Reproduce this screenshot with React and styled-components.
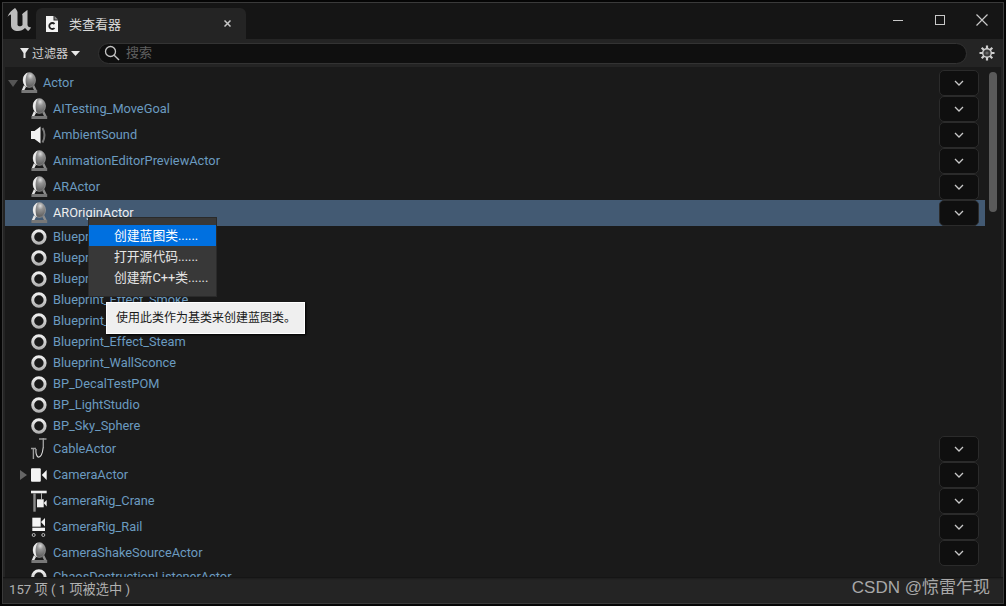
import React from 'react';
import styled, { createGlobalStyle } from 'styled-components';

const GlobalStyle = createGlobalStyle`
  html, body { margin: 0; padding: 0; background: #000; }
  body { font-family: Roboto, "Noto Sans CJK SC", sans-serif; }
`;

const Window = styled.div`
  box-sizing: border-box;
  width: 1006px;
  height: 606px;
  padding: 2px;
  background: #050505;
  display: flex;
  flex-direction: column;
  overflow: hidden;
`;

const Frame = styled.div`
  flex: 1;
  min-height: 0;
  border: 1px solid #3a3a3a;
  display: flex;
  flex-direction: column;
  background: #242424;
`;

const TitleBar = styled.div`
  height: 36px;
  flex-shrink: 0;
  display: flex;
  align-items: flex-end;
  padding-left: 4px;
  background: #151515;
`;

const Logo = styled.svg`
  width: 24px;
  height: 24px;
  margin-right: 5px;
  align-self: flex-start;
  margin-top: 5px;
`;

const Tab = styled.div`
  width: 210px;
  height: 31px;
  box-sizing: border-box;
  background: #242424;
  border-radius: 6px 6px 0 0;
  display: flex;
  align-items: center;
  padding: 0 15px 0 10px;
  color: #d8d8d8;
  font-size: 13px;
`;

const TabTitle = styled.span`
  flex: 1;
  margin-left: 11px;
  padding-bottom: 1px;
`;

const TabClose = styled.svg`
  width: 7px;
  height: 7px;
`;

const WindowControls = styled.div`
  margin-left: auto;
  align-self: flex-start;
  display: flex;
  align-items: center;
  height: 34px;
  padding-right: 11px;
  gap: 22px;
`;

const ControlIcon = styled.svg`
  width: 20px;
  height: 20px;
  display: block;
`;

const Toolbar = styled.div`
  height: 28px;
  flex-shrink: 0;
  display: flex;
  align-items: center;
  padding: 0 8px 0 17px;
`;

const FilterButton = styled.div`
  display: flex;
  align-items: center;
  color: #d0d0d0;
  font-size: 12px;
  width: 78px;
`;

const FilterLabel = styled.span`
  margin-left: 3px;
  padding-bottom: 1px;
`;

const FilterCaret = styled.svg`
  width: 9px;
  height: 5px;
  margin-left: 3px;
`;

const SearchBox = styled.div`
  flex: 1;
  height: 21px;
  box-sizing: border-box;
  background: #0f0f0f;
  border: 1px solid #333;
  border-radius: 11px;
  display: flex;
  align-items: center;
  padding-left: 5px;
  color: #5f5f5f;
  font-size: 13px;
  gap: 6px;
`;

const SearchLabel = styled.span`
  padding-bottom: 3px;
`;

const GearIcon = styled.svg`
  width: 16px;
  height: 16px;
  margin-left: 12px;
`;

const Body = styled.div`
  flex: 1;
  min-height: 0;
  position: relative;
  display: flex;
  margin: 0 2px;
  background: #1a1a1a;
`;

const Tree = styled.div`
  flex: 1;
  min-width: 0;
  overflow: hidden;
  padding-top: 3px;
`;

const Row = styled.div`
  height: ${(p) => (p.$tall ? 26 : 21)}px;
  width: 980px;
  display: flex;
  align-items: center;
  box-sizing: border-box;
  background: ${(p) => (p.$selected ? '#435a73' : 'transparent')};
  color: ${(p) => (p.$selected ? '#eeeeee' : '#6b9bc0')};
  font-size: 12.8px;
  padding-left: ${(p) => (p.$root ? 3 : 13)}px;
`;

const Expander = styled.div`
  width: 13px;
  display: flex;
  flex-shrink: 0;
`;

const ArrowDown = styled.div`
  width: 0;
  height: 0;
  border-left: 5.5px solid transparent;
  border-right: 5.5px solid transparent;
  border-top: 7px solid #555;
  margin-top: 1px;
`;

const ArrowRight = styled.div`
  width: 0;
  height: 0;
  margin-left: 2px;
  border-top: 5.5px solid transparent;
  border-bottom: 5.5px solid transparent;
  border-left: 7px solid #666;
`;

const IconSlot = styled.svg`
  width: 18px;
  height: 24px;
  flex-shrink: 0;
`;

const Name = styled.span`
  margin-left: 4px;
  flex: 1;
  white-space: nowrap;
  padding-bottom: ${(p) => (p.$tall ? 2 : 0)}px;
`;

const ChevronButton = styled.div`
  width: 40px;
  height: 26px;
  box-sizing: border-box;
  margin-right: 6px;
  background: #0f0f0f;
  border: 1px solid #2b2b2b;
  border-radius: 5px;
  display: flex;
  align-items: center;
  justify-content: center;
`;

const ScrollTrack = styled.div`
  width: 16px;
  flex-shrink: 0;
  padding: 5px 0 0 4px;
  box-sizing: border-box;
`;

const ScrollThumb = styled.div`
  width: 8px;
  height: 140px;
  border-radius: 4px;
  background: #5a5a5a;
`;

const Menu = styled.div`
  position: absolute;
  left: 83px;
  top: 150px;
  width: 129px;
  box-sizing: border-box;
  padding: 7px 0 8px;
  background: #383838;
  border: 1px solid #2a2a2a;
  font-size: 12.8px;
`;

const MenuItem = styled.div`
  height: 21px;
  line-height: 22px;
  padding-left: 25px;
  background: ${(p) => (p.$active ? '#0070e0' : 'transparent')};
  color: ${(p) => (p.$active ? '#fff' : '#e6e6e6')};
`;

const Tooltip = styled.div`
  position: absolute;
  left: 101px;
  top: 235px;
  width: 199px;
  height: 32px;
  box-sizing: border-box;
  padding-left: 9px;
  line-height: 30px;
  background: #efefef;
  border: 1px solid #fff;
  box-shadow: 1px 1px 2px #000;
  font-size: 12px;
  color: #1a1a1a;
`;

const StatusBar = styled.div`
  height: 26px;
  flex-shrink: 0;
  display: flex;
  align-items: center;
  justify-content: space-between;
  padding: 0 13px 0 6px;
  color: #b0b0b0;
  font-size: 13.2px;
  box-shadow: inset 0 2px 2px -1px #111;
`;

const StatusText = styled.span`
  padding-bottom: 3px;
`;

const Watermark = styled.span`
  color: #a8a8a8;
  font-family: "Liberation Sans", "Noto Sans CJK SC", sans-serif;
  font-size: 17px;
  line-height: 20px;
  padding-bottom: 5px;
`;

function ActorIcon() {
  return (
    <IconSlot viewBox="0 0 18 24">
      <defs>
        <radialGradient id="ball" cx="0.58" cy="0.22" r="0.85">
          <stop offset="0" stopColor="#dcdcdc" />
          <stop offset="0.3" stopColor="#949494" />
          <stop offset="1" stopColor="#505050" />
        </radialGradient>
      </defs>
      <path d="M3 14 L0.8 19 H3.4 L5 16 Z" fill="#e4e4e4" />
      <path d="M13.2 14 L15.6 19 H13 L11.4 16 Z" fill="#8c8c8c" />
      <ellipse cx="8.3" cy="9" rx="6.2" ry="7.4" fill="url(#ball)" stroke="#a8a8a8" strokeWidth="0.6" />
      <path d="M6.6 1.8 C3 3 1.6 7 2.1 10.8 C2.6 13.6 4.2 15.6 6 16.2 C4.2 12.5 4 6 6.6 1.8 Z" fill="#ececec" />
      <rect x="0.4" y="19" width="15.8" height="3" fill="#777" />
    </IconSlot>
  );
}

function SoundIcon() {
  return (
    <IconSlot viewBox="0 0 18 24">
      <path d="M0 8 H3.5 L9.5 3.5 V20.5 L3.5 16 H0 Z" fill="#f2f2f2" />
      <path d="M11.5 5 Q15.5 12 11.5 19.5" fill="none" stroke="#777" strokeWidth="2" />
    </IconSlot>
  );
}

function RingIcon() {
  return (
    <IconSlot viewBox="0 0 18 24">
      <defs>
        <linearGradient id="ring" x1="0" y1="0" x2="0" y2="1">
          <stop offset="0" stopColor="#ededed" />
          <stop offset="1" stopColor="#b4b4b4" />
        </linearGradient>
      </defs>
      <circle cx="7.9" cy="12" r="6.2" fill="none" stroke="url(#ring)" strokeWidth="3" />
    </IconSlot>
  );
}

function CableIcon() {
  return (
    <IconSlot viewBox="0 0 18 24">
      <path d="M12.3 10 Q11 21 7 20 Q4.5 18 5 12" fill="none" stroke="#d8d8d8" strokeWidth="1.1" />
      <path d="M12.3 1 V10 M8 2 H15.5 M0 11.5 H5 M2.4 11.5 V22" fill="none" stroke="#9a9a9a" strokeWidth="1.4" />
    </IconSlot>
  );
}

function CameraIcon() {
  return (
    <IconSlot viewBox="0 0 18 24">
      <rect x="0" y="5.3" width="9.8" height="13.4" rx="1" fill="#f4f4f4" />
      <path d="M10.8 12 L15.7 7 V17 Z" fill="#f4f4f4" />
    </IconSlot>
  );
}

function CraneIcon() {
  return (
    <IconSlot viewBox="0 0 18 24">
      <rect x="0" y="1.7" width="15.7" height="2.6" fill="#f0f0f0" />
      <rect x="2.3" y="4.3" width="2.4" height="18.4" fill="#8a8a8a" />
      <rect x="10" y="4.3" width="0.8" height="6" fill="#cfcfcf" />
      <rect x="6" y="10.3" width="6.7" height="8" fill="#f0f0f0" />
      <path d="M12.7 14 L15.7 11 V17.5 Z" fill="#f0f0f0" />
    </IconSlot>
  );
}

function RailIcon() {
  return (
    <IconSlot viewBox="0 0 18 24">
      <rect x="1.3" y="2.7" width="8.4" height="9" fill="#f4f4f4" />
      <path d="M10 7 L14 3 V11.5 Z" fill="#f4f4f4" />
      <rect x="1.3" y="12.7" width="12.7" height="3.3" fill="#f4f4f4" />
      <circle cx="2.7" cy="20" r="1.5" fill="none" stroke="#bbb" />
      <circle cx="12.3" cy="20" r="1.5" fill="none" stroke="#bbb" />
    </IconSlot>
  );
}

const icons = {
  actor: ActorIcon,
  sound: SoundIcon,
  ring: RingIcon,
  cable: CableIcon,
  camera: CameraIcon,
  crane: CraneIcon,
  rail: RailIcon,
};

const rows = [
  { name: 'Actor', icon: 'actor', root: true },
  { name: 'AITesting_MoveGoal', icon: 'actor' },
  { name: 'AmbientSound', icon: 'sound' },
  { name: 'AnimationEditorPreviewActor', icon: 'actor' },
  { name: 'ARActor', icon: 'actor' },
  { name: 'AROriginActor', icon: 'actor', selected: true },
  { name: 'Blueprint_CeilingLight', icon: 'ring', short: true },
  { name: 'Blueprint_Effect_Explosion', icon: 'ring', short: true },
  { name: 'Blueprint_Effect_Fire', icon: 'ring', short: true },
  { name: 'Blueprint_Effect_Smoke', icon: 'ring', short: true },
  { name: 'Blueprint_Effect_Sparks', icon: 'ring', short: true },
  { name: 'Blueprint_Effect_Steam', icon: 'ring', short: true },
  { name: 'Blueprint_WallSconce', icon: 'ring', short: true },
  { name: 'BP_DecalTestPOM', icon: 'ring', short: true },
  { name: 'BP_LightStudio', icon: 'ring', short: true },
  { name: 'BP_Sky_Sphere', icon: 'ring', short: true },
  { name: 'CableActor', icon: 'cable' },
  { name: 'CameraActor', icon: 'camera', collapsed: true },
  { name: 'CameraRig_Crane', icon: 'crane' },
  { name: 'CameraRig_Rail', icon: 'rail' },
  { name: 'CameraShakeSourceActor', icon: 'actor' },
  { name: 'ChaosDestructionListenerActor', icon: 'ring', short: true },
];

function Chevron() {
  return (
    <svg width="10" height="6" viewBox="0 0 10 6">
      <path d="M1 1 L5 5 L9 1" fill="none" stroke="#c8c8c8" strokeWidth="1.3" />
    </svg>
  );
}

function TreeRow({ row }) {
  const Icon = icons[row.icon];
  return (
    <Row $tall={!row.short} $selected={row.selected} $root={row.root}>
      <Expander>
        {row.root && <ArrowDown />}
        {row.collapsed && <ArrowRight />}
      </Expander>
      <Icon />
      <Name $tall={!row.short}>{row.name}</Name>
      {!row.short && (
        <ChevronButton>
          <Chevron />
        </ChevronButton>
      )}
    </Row>
  );
}

export default function App() {
  return (
    <>
      <GlobalStyle />
      <Window>
        <Frame>
          <TitleBar>
            <Logo viewBox="0 0 24 24">
              <path
                d="M8 0 C5 2 1.5 5 0.5 9 C1.5 7.5 3 6.5 4 6.5 L4 17 C4 21 7 23 11 23 C14 23 16 22 18 20 L21 23 C22 22.5 23.5 21 24 19 C22.5 19.5 21 19 20.5 17 L20.5 2 C19 3 16.5 4.5 15 6.5 C15.5 7 15.5 8 15.5 9 L15.5 17 C14.5 18.5 11.5 19 10.5 17 L10.5 4 C10 2 9 1 8 0 Z"
                fill="#bdbdbd"
              />
            </Logo>
            <Tab>
              <svg width="12" height="16" viewBox="0 0 12 16">
                <path d="M0 0 H7.5 V4.5 H12 V16 H0 Z" fill="#f4f4f4" />
                <path d="M8.5 0 L12 3.5 H8.5 Z" fill="#8a8a8a" />
                <path d="M8.5 8 A3 3 0 1 0 8.5 12" fill="none" stroke="#222" strokeWidth="1.8" />
              </svg>
              <TabTitle>类查看器</TabTitle>
              <TabClose viewBox="0 0 7 7">
                <path d="M0.5 0.5 L6.5 6.5 M6.5 0.5 L0.5 6.5" stroke="#c8c8c8" strokeWidth="1.5" />
              </TabClose>
            </Tab>
            <WindowControls>
              <ControlIcon viewBox="0 0 20 20">
                <path d="M5 10.5 H15" stroke="#c8c8c8" strokeWidth="1" />
              </ControlIcon>
              <ControlIcon viewBox="0 0 20 20">
                <rect x="5.5" y="5.5" width="9" height="9" fill="none" stroke="#c8c8c8" />
              </ControlIcon>
              <ControlIcon viewBox="0 0 20 20">
                <path d="M4.5 4.5 L15.5 15.5 M15.5 4.5 L4.5 15.5" stroke="#c8c8c8" strokeWidth="1.2" />
              </ControlIcon>
            </WindowControls>
          </TitleBar>
          <Toolbar>
            <FilterButton>
              <svg width="9" height="10" viewBox="0 0 9 10">
                <path d="M0 0 H9 L5.5 5 V10 H3.5 V5 Z" fill="#e8e8e8" />
              </svg>
              <FilterLabel>过滤器</FilterLabel>
              <FilterCaret viewBox="0 0 9 5">
                <path d="M0 0 H9 L4.5 5 Z" fill="#e8e8e8" />
              </FilterCaret>
            </FilterButton>
            <SearchBox>
              <svg width="16" height="16" viewBox="0 0 16 16">
                <circle cx="6.5" cy="6.5" r="5" fill="none" stroke="#c4c4c4" strokeWidth="1.3" />
                <path d="M10.2 10.2 L15 15" stroke="#c4c4c4" strokeWidth="1.4" />
              </svg>
              <SearchLabel>搜索</SearchLabel>
            </SearchBox>
            <GearIcon viewBox="0 0 16 16">
              <path
                d="M8 0.5 V15.5 M0.5 8 H15.5 M2.7 2.7 L13.3 13.3 M13.3 2.7 L2.7 13.3"
                stroke="#cfcfcf"
                strokeWidth="2.2"
              />
              <circle cx="8" cy="8" r="5" fill="#cfcfcf" />
              <circle cx="8" cy="8" r="3.6" fill="#3a3a3a" />
              <circle cx="8" cy="8" r="1.6" fill="#6a6a6a" />
            </GearIcon>
          </Toolbar>
          <Body>
            <Tree>
              {rows.map((row) => (
                <TreeRow key={row.name} row={row} />
              ))}
            </Tree>
            <ScrollTrack>
              <ScrollThumb />
            </ScrollTrack>
            <Menu>
              <MenuItem $active>创建蓝图类......</MenuItem>
              <MenuItem>打开源代码......</MenuItem>
              <MenuItem>创建新C++类......</MenuItem>
            </Menu>
            <Tooltip>使用此类作为基类来创建蓝图类。</Tooltip>
          </Body>
          <StatusBar>
            <StatusText>157 项 ( 1 项被选中 )</StatusText>
            <Watermark>CSDN @惊雷乍现</Watermark>
          </StatusBar>
        </Frame>
      </Window>
    </>
  );
}
